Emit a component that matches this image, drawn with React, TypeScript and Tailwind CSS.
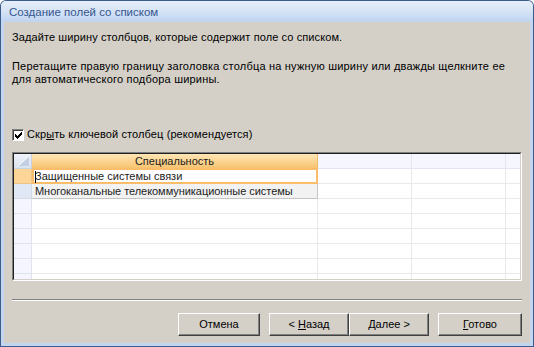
import React from "react";

const rows = Array.from({ length: 8 }, (_, i) => i);

function Check() {
  return (
    <svg width="7" height="7" viewBox="0 0 7 7" shapeRendering="crispEdges">
      <path d="M0 2 L2 4 L6 0 L7 0 L7 3 L2 7 L2 7 L0 5 Z" fill="#000" />
    </svg>
  );
}

function Btn({ w, children }: { w: string; children: React.ReactNode }) {
  return (
    <button
      className={`${w} h-[23px] bg-[#d4d0c8] border border-t-white border-l-white border-r-[#404040] border-b-[#404040] shadow-[inset_-1px_-1px_0_#808080] text-[11px] leading-[13px] text-black`}
    >
      {children}
    </button>
  );
}

export default function App() {
  return (
    <div className="w-[534px] h-[347px] rounded-t-[6px] bg-[#3d5c8b] p-px font-['Liberation_Sans',Arial,sans-serif]">
      <div className="h-full rounded-t-[5px] bg-[#c3d6ef] flex flex-col px-[3px] pb-[3px]">
        <div className="h-[18px] -mx-[3px] rounded-t-[5px] bg-linear-to-b from-[#e6eefa] via-[#d8e5f6] to-[#c6d9f3] pl-[8px] pt-[4px] text-[11.5px] leading-[14px] text-[#34568f]">
          Создание полей со списком
        </div>
        <div className="mt-[3px] flex-1 bg-[#d4d0c8] flex flex-col px-2 pt-[9px] text-[11px] leading-[13px] text-black">
          <p className="whitespace-nowrap tracking-[0.1px]">Задайте ширину столбцов, которые содержит поле со списком.</p>
          <p className="mt-[16px] whitespace-nowrap tracking-[0.2px]">
            Перетащите правую границу заголовка столбца на нужную ширину или дважды щелкните ее
            <br />
            для автоматического подбора ширины.
          </p>
          <div className="mt-[42px] flex items-center h-[13px]">
            <div className="w-[12px] h-[12px] bg-white border border-t-[#808080] border-l-[#808080] border-r-white border-b-white shadow-[inset_1px_1px_0_#404040] flex items-center justify-center pl-px pt-px">
              <Check />
            </div>
            <span className="ml-[3px] tracking-[0.1px]">
              Скр<span className="underline">ы</span>ть ключевой столбец (рекомендуется)
            </span>
          </div>
          <div className="mt-[11px] h-[129px] border border-t-[#808080] border-l-[#808080] border-r-white border-b-white">
            <div className="h-full border border-t-[#202020] border-l-[#202020] border-r-[#d4d0c8] border-b-[#d4d0c8] bg-white overflow-hidden">
              <div className="grid grid-cols-[18px_286px_94px_94px_14px] auto-rows-[15px] text-[11px] leading-[14px] text-[#1c1c1c]">
                <div className="bg-linear-to-b from-[#eef2f9] to-[#dae2ef] border-r border-b border-[#c8d1e0] flex items-end justify-end pr-[2px] pb-[2px]">
                  <svg width="11" height="10" viewBox="0 0 11 10">
                    <path d="M11 0 L11 10 L0 10 Z" fill="#c3cfe2" />
                    <path d="M10.5 0.5 L0.5 9.5" stroke="#ffffff" strokeWidth="1" />
                  </svg>
                </div>
                <div className="bg-linear-to-b from-[#fde6b6] to-[#f7c36e] border-r border-b border-[#efb964] text-center">
                  Специальность
                </div>
                <div className="bg-[#f5f6fe] border-r border-b border-[#e3e5ef]" />
                <div className="bg-[#f5f6fe] border-r border-b border-[#e3e5ef]" />
                <div className="bg-[#f5f6fe] border-b border-[#e3e5ef]" />
                {rows.map((i) => (
                  <React.Fragment key={i}>
                    <div
                      className={`border-r border-b ${
                        i === 0
                          ? "bg-[#fcd597] border-[#e9c58a]"
                          : i === 1
                          ? "bg-[#e0e8f5] border-[#d2d8e4]"
                          : "bg-[#f4f5fe] border-[#e2e3ea]"
                      }`}
                    />
                    {i === 0 ? (
                      <div className="relative border-r border-b border-[#e8e8e8] pl-[3px] bg-white">
                        <div className="absolute left-0 right-[-1px] top-[-1px] bottom-[-1px] border-2 border-[#fbbd6c]" />
                        <span className="relative">
                          <span className="absolute left-0 top-[1px] w-px h-[12px] bg-black" />
                          Защищенные системы связи
                        </span>
                      </div>
                    ) : i === 1 ? (
                      <div className="border-r border-b border-[#c4c4c4] bg-[#f2f2f2] pl-[3px] whitespace-nowrap tracking-[-0.05px]">
                        Многоканальные телекоммуникационные системы
                      </div>
                    ) : (
                      <div className="border-r border-b border-[#e9e9e9] bg-white" />
                    )}
                    <div className="border-r border-b border-[#e9e9e9] bg-white" />
                    <div className="border-r border-b border-[#e9e9e9] bg-white" />
                    <div className="border-b border-[#e9e9e9] bg-white" />
                  </React.Fragment>
                ))}
              </div>
            </div>
          </div>
          <div className="mt-[18px] h-[2px] border-t border-t-[#808080] border-b border-b-white" />
          <div className="mt-[12px] flex justify-end">
            <Btn w="w-[82px]">Отмена</Btn>
            <div className="w-[9px]" />
            <Btn w="w-[80px]">
              &lt; <span className="underline">Н</span>азад
            </Btn>
            <Btn w="w-[80px]">
              <span className="underline">Д</span>алее &gt;
            </Btn>
            <div className="w-[9px]" />
            <Btn w="w-[84px]">
              <span className="underline">Г</span>отово
            </Btn>
          </div>
        </div>
      </div>
    </div>
  );
}
